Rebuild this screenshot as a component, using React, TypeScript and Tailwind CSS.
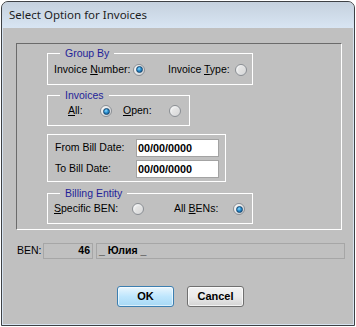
import React from "react";

function Radio({ checked }: { checked?: boolean }) {
  return (
    <span className="w-[12px] h-[12px] shrink-0 rounded-full border border-[#8b8f94] bg-linear-to-br from-[#fbfbfb] to-[#cfd1d3] flex items-center justify-center">
      {checked ? (
        <span className="w-[7px] h-[7px] rounded-full border border-[#14466f] bg-[radial-gradient(circle_at_40%_35%,#8fdcff_0%,#2a8fd0_45%,#0c4f86_100%)]" />
      ) : (
        <span className="w-[7px] h-[7px] rounded-full bg-linear-to-br from-[#e9e9e9] to-[#d9d9d9]" />
      )}
    </span>
  );
}

function Group({
  legend,
  className,
  children,
}: {
  legend?: string;
  className: string;
  children: React.ReactNode;
}) {
  return (
    <div className={"relative border border-white " + className}>
      {legend && (
        <span className="absolute left-[12px] top-[-7px] px-[5px] bg-[#c0c0c0] text-[#1f1f98] leading-[12px]">
          {legend}
        </span>
      )}
      {children}
    </div>
  );
}

export default function App() {
  return (
    <div className="w-[356px] h-[327px] bg-white pt-[1px] pl-[1px] font-['Liberation_Sans',Arial,sans-serif] text-[10.5px] text-black">
      <div className="w-[354px] h-[325px] border border-[#3e4145] rounded-t-[7px] overflow-hidden flex flex-col bg-[#c0c0c0]">
        {/* Title bar */}
        <div className="h-[26px] shrink-0 bg-linear-to-b from-[#c5d1de] to-[#d8e5f3] flex items-center pl-[7px]">
          <span className="font-['Noto_Sans',sans-serif] text-[11.5px] text-[#1e1e1e] leading-none">
            Select Option for Invoices
          </span>
        </div>
        {/* Body */}
        <div className="flex-1 border-x border-b border-[#d6e3f0] flex flex-col">
          {/* Big etched frame */}
          <div className="mt-[15px] ml-[13px] w-[326px] h-[187px] border-t border-l border-[#6b6b6b] border-r border-b border-r-white border-b-white pl-[30px] pt-[9px] flex flex-col">
            {/* Group By */}
            <Group legend="Group By" className="w-[206px] h-[32px] flex items-center pl-[6px] pt-[1px]">
              <span className="w-[79px]">
                Invoice <span className="underline">N</span>umber:
              </span>
              <Radio checked />
              <span className="w-[23px]" />
              <span className="w-[67px]">
                Invoice <span className="underline">T</span>ype:
              </span>
              <Radio />
            </Group>
            {/* Invoices */}
            <Group legend="Invoices" className="mt-[10px] w-[143px] h-[31px] flex items-center pl-[20px] pt-[1px]">
              <span className="w-[32px]">
                <span className="underline">A</span>ll:
              </span>
              <Radio checked />
              <span className="w-[11px]" />
              <span className="w-[46px]">
                <span className="underline">O</span>pen:
              </span>
              <Radio />
            </Group>
            {/* Dates */}
            <Group className="mt-[8px] w-[179px] h-[48px] flex flex-col pl-[7px] pt-[4px] gap-[3px]">
              <div className="flex items-center h-[18px]">
                <span className="w-[81px]">From Bill Date:</span>
                <span className="w-[83px] h-[18px] bg-white border border-[#a3a3a3] flex items-center pl-[1px] font-bold text-[10.8px]">
                  00/00/0000
                </span>
              </div>
              <div className="flex items-center h-[18px]">
                <span className="w-[81px]">To Bill Date:</span>
                <span className="w-[83px] h-[18px] bg-white border border-[#a3a3a3] flex items-center pl-[1px] font-bold text-[10.8px]">
                  00/00/0000
                </span>
              </div>
            </Group>
            {/* Billing Entity */}
            <Group legend="Billing Entity" className="mt-[11px] w-[206px] h-[31px] flex items-center pl-[6px] pt-[1px]">
              <span className="w-[78px]">
                <span className="underline">S</span>pecific BEN:
              </span>
              <Radio />
              <span className="w-[30px]" />
              <span className="w-[59px]">
                All <span className="underline">B</span>ENs:
              </span>
              <Radio checked />
            </Group>
          </div>
          {/* BEN row */}
          <div className="mt-[13px] flex items-center h-[16px] pl-[14px]">
            <span className="w-[26px]">BEN:</span>
            <span className="w-[50px] h-[16px] border border-[#a6a6a6] flex items-center justify-end pr-[2px] font-bold">
              46
            </span>
            <span className="w-[3px]" />
            <span className="w-[249px] h-[16px] border border-[#a6a6a6] flex items-center pl-[2px] font-bold">
              _ Юлия _
            </span>
          </div>
          {/* Buttons */}
          <div className="mt-[27px] flex pl-[114px] gap-[13px]">
            <button className="w-[57px] h-[21px] rounded-[3px] border border-[#3c7fb1] bg-linear-to-b from-[#eaf6fd] via-[#bee6fd] to-[#a7d9f5] shadow-[inset_0_0_0_1px_rgba(255,255,255,0.6)] font-bold text-[11px] flex items-center justify-center">
              OK
            </button>
            <button className="w-[57px] h-[21px] rounded-[3px] border border-[#707070] bg-linear-to-b from-[#f2f2f2] via-[#ebebeb] to-[#d4d4d4] shadow-[inset_0_0_0_1px_rgba(255,255,255,0.7)] font-bold text-[11px] flex items-center justify-center">
              Cancel
            </button>
          </div>
        </div>
      </div>
    </div>
  );
}
